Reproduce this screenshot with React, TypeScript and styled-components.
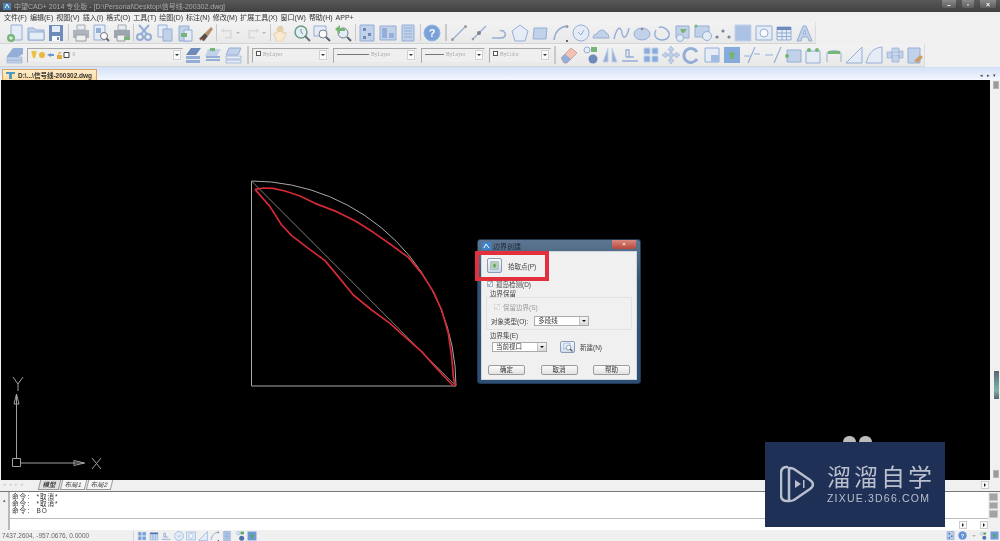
import React from "react";
import styled, { createGlobalStyle } from "styled-components";

const GlobalStyle = createGlobalStyle`
  html, body { margin: 0; padding: 0; background: #000; }
  body { font-family: "Liberation Sans", "Noto Sans CJK SC", sans-serif; }
`;

const Root = styled.div`
  width: 1000px;
  height: 541px;
  display: flex;
  flex-direction: column;
  overflow: hidden;
  position: relative;
  background: #f0f0f0;
  filter: blur(0.35px);
`;

const TitleBar = styled.div`
  height: 12px;
  flex: none;
  display: flex;
  align-items: center;
  background: linear-gradient(#595959, #404040);
  color: #a9a9a9;
  font-size: 7px;
  padding: 0 4px 0 3px;
  gap: 3px;
`;

const WinButtons = styled.div`
  margin-left: auto;
  display: flex;
  gap: 6px;
  align-self: flex-start;
`;

const WinButton = styled.div<{ $w: number }>`
  width: ${(p) => p.$w}px;
  height: 8px;
  background: linear-gradient(#8a8a8a, #5d5d5d);
  display: flex;
  align-items: center;
  justify-content: center;
  color: #fff;
  font-size: 7px;
  font-weight: bold;
  border-radius: 0 0 2px 2px;
`;

const MenuBar = styled.div`
  height: 10px;
  flex: none;
  display: flex;
  align-items: center;
  gap: 3px;
  padding-left: 4px;
  font-size: 7px;
  color: #333;
  white-space: nowrap;
`;

const ToolRow = styled.div<{ $h: number }>`
  height: ${(p) => p.$h}px;
  flex: none;
  display: flex;
  overflow: hidden;
`;

const ToolBand = styled.div<{ $w: number }>`
  width: ${(p) => p.$w}px;
  flex: none;
  display: flex;
  align-items: center;
  padding-left: 5px;
  box-sizing: border-box;
  background: linear-gradient(#f2f2f2, #e9e9e9);
  border-right: 1px solid #dcdcdc;
  border-bottom: 1px solid #d4d4d4;
`;

const Slot = styled.div<{ $w?: number }>`
  width: ${(p) => p.$w ?? 20.5}px;
  flex: none;
  display: flex;
  align-items: center;
  justify-content: center;
  svg { display: block; opacity: 0.8; }
`;

const Sep = styled.div<{ $w: number; $thick?: boolean }>`
  width: ${(p) => p.$w}px;
  flex: none;
  align-self: stretch;
  margin: 2px 0;
  display: flex;
  justify-content: center;
  &::before {
    content: "";
    width: ${(p) => (p.$thick ? 2 : 1)}px;
    background: #c9c9c9;
  }
`;

const Caret = styled.span`
  width: 0;
  height: 0;
  margin-left: 2px;
  border-left: 2px solid transparent;
  border-right: 2px solid transparent;
  border-top: 2px solid #b5b5b5;
`;

const Combo = styled.div<{ $w: number; $ml?: number; $mr?: number }>`
  width: ${(p) => p.$w}px;
  height: 15px;
  flex: none;
  box-sizing: border-box;
  margin-left: ${(p) => p.$ml ?? 0}px;
  margin-right: ${(p) => p.$mr ?? 4}px;
  display: flex;
  align-items: flex-start;
  gap: 2px;
  padding: 2px 0 0 3px;
  position: relative;
  font-size: 5.5px;
  color: #a9a9a9;
  font-family: "Liberation Serif", serif;
  background: #efefef;
  border: 1px solid #a8a8a8;
  border-right-color: #e8e8e8;
  border-bottom-color: #e8e8e8;
`;

const ComboArrow = styled.div`
  position: absolute;
  right: 1px;
  top: 1px;
  width: 8px;
  height: 10px;
  background: #fbfbfb;
  border: 1px solid #d2d2d2;
  box-sizing: border-box;
  display: flex;
  align-items: center;
  justify-content: center;
  &::before {
    content: "";
    border-left: 2px solid transparent;
    border-right: 2px solid transparent;
    border-top: 2px solid #333;
  }
`;

const LineSample = styled.span<{ $w: number }>`
  width: ${(p) => p.$w}px;
  height: 1px;
  margin-top: 3px;
  background: #777;
  flex: none;
`;

const ColorBox = styled.span`
  width: 5px;
  height: 5px;
  flex: none;
  border: 1px solid #555;
  background: #fff;
  box-sizing: border-box;
`;

const TabBand = styled.div`
  height: 13px;
  flex: none;
  display: flex;
  align-items: flex-end;
  padding-left: 2px;
  background: linear-gradient(#d3e0f8, #f4f7fe);
`;

const DocTab = styled.div`
  width: 95px;
  height: 11px;
  box-sizing: border-box;
  display: flex;
  align-items: center;
  gap: 3px;
  padding-left: 3px;
  border: 1px solid #d9a25a;
  border-bottom: none;
  background: linear-gradient(#fdeecb, #fbdca4);
  font-size: 6.5px;
  font-weight: bold;
  color: #333;
  white-space: nowrap;
`;

const TabNav = styled.div`
  margin-left: auto;
  margin-right: 3px;
  margin-bottom: 2px;
  font-size: 5px;
  color: #444;
  letter-spacing: 1px;
`;

const Workspace = styled.div`
  height: 400px;
  flex: none;
  display: flex;
  background: #f0f0f0;
`;

const Canvas = styled.div`
  width: 989px;
  margin-left: 1px;
  flex: none;
  background: #000;
  svg { display: block; }
`;

const SideBar = styled.div`
  flex: 1;
  display: flex;
  flex-direction: column;
  align-items: flex-end;
  padding: 1px 1px 0 0;
`;

const SideButton = styled.div`
  width: 6px;
  height: 8px;
  background: #9a9a9a;
  border: 1px solid #b5b5b5;
  box-sizing: border-box;
`;

const SideThumb = styled.div`
  width: 5px;
  height: 28px;
  margin-top: 282px;
  background: linear-gradient(#5a6470, #6f9c97 45%, #7fb0a8 70%, #59646d);
`;

const SideEnd = styled(SideButton)`
  margin-top: auto;
  margin-bottom: 2px;
`;

const LayoutTabs = styled.div`
  height: 11px;
  flex: none;
  display: flex;
  align-items: flex-start;
  padding-left: 3px;
  font-size: 6.5px;
  color: #444;
  background: #f0f0f0;
  border-bottom: 1px solid #777;
`;

const NavDots = styled.span`
  color: #c9c9c9;
  letter-spacing: 3px;
  font-size: 5px;
  margin-right: 8px;
  line-height: 9px;
  width: 28px;
`;

const LayoutTab = styled.span<{ $active?: boolean }>`
  padding: 0 3px;
  line-height: 9px;
  border: 1px solid #999;
  border-top: none;
  margin-right: 1px;
  transform: skewX(-14deg);
  background: ${(p) => (p.$active ? "#e2e2e2" : "#f5f5f5")};
  font-weight: ${(p) => (p.$active ? "bold" : "normal")};
`;

const HScroll = styled.div`
  display: flex;
  gap: 8px;
  margin: 1px 11px 0 auto;
`;

const ScrollBtn = styled.div`
  width: 8px;
  height: 8px;
  background: #fafafa;
  border: 1px solid #ccc;
  box-sizing: border-box;
  display: flex;
  align-items: center;
  justify-content: center;
  &::before {
    content: "";
    border-top: 2px solid transparent;
    border-bottom: 2px solid transparent;
    border-left: 2px solid #222;
  }
`;

const CommandArea = styled.div`
  height: 38px;
  flex: none;
  display: flex;
  background: #f0f0f0;
`;

const CommandGrip = styled.div`
  width: 8px;
  flex: none;
  border-right: 2px solid #b9b9b9;
  font-size: 5px;
  color: #666;
  line-height: 16px;
  text-align: center;
`;

const CommandBody = styled.div`
  width: 978px;
  flex: none;
  display: flex;
  flex-direction: column;
  background: #fff;
`;

const CommandLog = styled.div`
  height: 27px;
  flex: none;
  box-sizing: border-box;
  padding: 1px 0 0 2px;
  border-bottom: 1px solid #bdbdbd;
  font-size: 6.5px;
  line-height: 7.2px;
  letter-spacing: 1px;
  color: #333;
`;

const CommandLine = styled.div`
  display: flex;
  gap: 2px;
`;

const CommandInput = styled.div`
  flex: 1;
  display: flex;
  justify-content: flex-end;
  align-items: center;
  gap: 13px;
`;

const CommandScroll = styled.div`
  flex: 1;
  display: flex;
  flex-direction: column;
  gap: 1px;
  padding: 1px 2px 12px 1px;
`;

const CommandScrollPart = styled.div`
  flex: 1;
  background: #a3a3a3;
  border: 1px solid #c5c5c5;
`;

const StatusBar = styled.div`
  flex: 1;
  display: flex;
  align-items: center;
  padding-left: 2px;
  font-size: 6.5px;
  color: #666;
  background: #f0f0f0;
`;

const Coordinates = styled.div`
  width: 131px;
  flex: none;
  border-right: 1px solid #d5d5d5;
  line-height: 10px;
  white-space: nowrap;
`;

const StatusIcons = styled.div`
  margin-left: 3px;
  display: flex;
  gap: 2.2px;
`;

const StatusTray = styled.div`
  margin-left: auto;
  display: flex;
  align-items: center;
  gap: 3px;
  padding-right: 1px;
`;

const Dialog = styled.div`
  position: absolute;
  left: 477px;
  top: 239px;
  width: 164px;
  height: 145px;
  box-sizing: border-box;
  padding: 0 3px 3px;
  display: flex;
  flex-direction: column;
  border-radius: 3px;
  border: 1px solid #23364f;
  background: linear-gradient(#5d7590, #33536f 30%, #2c4e74);
  font-size: 6.5px;
  color: #444;
`;

const DialogHead = styled.div`
  height: 11px;
  flex: none;
  display: flex;
  align-items: center;
  gap: 2px;
  padding-left: 1px;
  color: #1e2a38;
  font-size: 7px;
`;

const DialogClose = styled.div`
  margin-left: auto;
  align-self: flex-start;
  width: 24px;
  height: 9px;
  margin-right: 1px;
  background: linear-gradient(#d98a80, #b9463c);
  border-radius: 0 0 3px 3px;
  color: #fff;
  font-size: 6px;
  line-height: 9px;
  text-align: center;
`;

const DialogBody = styled.div`
  flex: 1;
  background: #f0f0f0;
  padding: 7px 6px 0;
  display: flex;
  flex-direction: column;
  box-shadow: inset 0 0 0 1px #cfd6de;
`;

const Row = styled.div<{ $mt?: number; $ml?: number; $gap?: number }>`
  display: flex;
  align-items: center;
  gap: ${(p) => p.$gap ?? 4}px;
  margin-top: ${(p) => p.$mt ?? 0}px;
  margin-left: ${(p) => p.$ml ?? 0}px;
  white-space: nowrap;
`;

const PickButton = styled.div`
  width: 15px;
  height: 15px;
  box-sizing: border-box;
  border: 1px solid #8b9bb5;
  border-radius: 2px;
  background: linear-gradient(#f7f9fc, #cfdbe9);
  display: flex;
  align-items: center;
  justify-content: center;
`;

const CheckBox = styled.span<{ $dim?: boolean }>`
  width: 6px;
  height: 6px;
  flex: none;
  background: #fff;
  border: 1px solid ${(p) => (p.$dim ? "#ddd" : "#a6b4c4")};
  box-sizing: border-box;
  font-size: 6px;
  line-height: 4px;
  color: ${(p) => (p.$dim ? "#aaa" : "#47607e")};
  &::before { content: "✓"; }
`;

const FieldGroup = styled.div`
  margin: 0 -1px;
  padding: 4px 4px 3px;
  border: 1px solid #e2e2e2;
`;

const GroupTitle = styled.div<{ $mt?: number }>`
  margin: ${(p) => p.$mt ?? 1}px 0 0 3px;
  line-height: 7px;
`;

const Muted = styled.span`
  color: #9a9a9a;
`;

const Select = styled.div<{ $w: number }>`
  width: ${(p) => p.$w}px;
  height: 10px;
  box-sizing: border-box;
  flex: none;
  border: 1px solid #ababab;
  background: #fff;
  padding-left: 3px;
  line-height: 8px;
  position: relative;
  color: #333;
`;

const SelectArrow = styled.div`
  position: absolute;
  right: 0;
  top: 0;
  bottom: 0;
  width: 8px;
  background: linear-gradient(#f6f6f6, #d8d8d8);
  border-left: 1px solid #c4c4c4;
  display: flex;
  align-items: center;
  justify-content: center;
  &::before {
    content: "";
    border-left: 2px solid transparent;
    border-right: 2px solid transparent;
    border-top: 2px solid #111;
  }
`;

const NewButton = styled(PickButton)`
  width: 15px;
  height: 12px;
  margin-left: 10px;
  margin-right: 2px;
`;

const ButtonRow = styled.div`
  margin-top: auto;
  margin-bottom: 5px;
  padding: 0 1px;
  display: flex;
  justify-content: space-between;
`;

const DialogButton = styled.div`
  width: 37px;
  height: 10px;
  box-sizing: border-box;
  border: 1px solid #9c9c9c;
  border-radius: 2px;
  background: linear-gradient(#fbfbfb, #e2e2e2);
  text-align: center;
  line-height: 8px;
  color: #333;
`;

const Highlight = styled.div`
  position: absolute;
  left: 475px;
  top: 251px;
  width: 74px;
  height: 30px;
  box-sizing: border-box;
  border: 4px solid #e2303d;
`;

const Watermark = styled.div`
  position: absolute;
  left: 765px;
  top: 442px;
  width: 180px;
  height: 85px;
  box-sizing: border-box;
  padding: 23px 0 0 15px;
  display: flex;
  gap: 13px;
  background: #1f3057;
  color: #b9bfcd;
`;

const Ear = styled.div<{ $x: number }>`
  position: absolute;
  left: ${(p) => p.$x}px;
  top: -6px;
  width: 13px;
  height: 6px;
  border-radius: 7px 7px 0 0;
  background: #bcbcbc;
`;

const BrandText = styled.div`
  display: flex;
  flex-direction: column;
  gap: 3px;
`;

const BrandName = styled.div`
  font-size: 24px;
  line-height: 25px;
  letter-spacing: 3px;
  white-space: nowrap;
`;

const BrandUrl = styled.div`
  font-family: "Liberation Sans", sans-serif;
  font-size: 10.5px;
  line-height: 11px;
  letter-spacing: 1.2px;
  white-space: nowrap;
`;

const B = "#b7cbe8";
const M = "#7f9fd2";
const D = "#4f72ad";
const L = "#e3ecf8";
const G = "#58a858";

const icons: Record<string, React.ReactNode> = {
  new: <><path d="M5 1h11v15H5z" fill={L} stroke={M} /><circle cx="5" cy="14" r="4" fill={G} /><path d="M3 14h4M5 12v4" stroke="#fff" /></>,
  open: <><path d="M1 4h6l2 2h8v10H1z" fill={B} stroke={M} /><path d="M2 8h15v8H2z" fill={L} stroke={M} /></>,
  save: <><path d="M2 1h14v16H2z" fill={D} /><path d="M5 2h8v6H5z" fill={L} /><path d="M5 12h8v5H5z" fill="#fff" /><path d="M10 13h2v3h-2z" fill={D} /></>,
  print: <><path d="M5 1h8v5H5z" fill={L} stroke="#999" /><path d="M1 6h16v8H1z" fill="#9ea7b2" /><path d="M4 11h10v6H4z" fill="#eef0f3" stroke="#888" /></>,
  preview: <><path d="M2 1h11v15H2z" fill={L} stroke={M} /><path d="M4 4h5v5H4z" fill={M} /><circle cx="12" cy="12" r="3.5" fill="#fff" stroke="#556" /><path d="M14.5 14.5L17 17" stroke="#445" strokeWidth="2" /></>,
  plot: <><path d="M5 1h8v5H5z" fill={L} stroke="#999" /><path d="M1 6h16v8H1z" fill="#8a94a2" /><path d="M4 11h8v6H4z" fill="#eef0f3" stroke="#888" /><path d="M11 13h6v3h-6z" fill={G} /></>,
  cut: <><circle cx="5" cy="13" r="3" fill="none" stroke={M} strokeWidth="2" /><circle cx="13" cy="13" r="3" fill="none" stroke={M} strokeWidth="2" /><path d="M6 10L14 1M12 10L4 1" stroke={M} strokeWidth="2" /></>,
  copy: <><path d="M2 1h9v12H2z" fill={L} stroke={M} /><path d="M7 5h9v12H7z" fill={B} stroke={M} /></>,
  paste: <><path d="M3 2h10v15H3z" fill={B} stroke={M} /><path d="M8 6h8v11H8z" fill={L} stroke={M} /><path d="M5 9h6v4H5z" fill={G} /></>,
  match: <><path d="M2 15l6-6 3 3-4 5z" fill="#332a22" /><path d="M8 9l6-6 2 2-5 7z" fill="#a67a45" /><path d="M3 16l3-1" stroke="#c33" /></>,
  undo: <><path d="M4 6h10v9H6" fill="none" stroke="#cfd4da" strokeWidth="2" /><path d="M1 6l4-3v6z" fill="#cfd4da" /></>,
  redo: <><path d="M14 6H4v9h8" fill="none" stroke="#cfd4da" strokeWidth="2" /><path d="M17 6l-4-3v6z" fill="#cfd4da" /></>,
  hand: <path d="M5 9V4h1.5v4V2.5H8V8V2H9.5v6V3H11v7l2-2 1.5 1-3 6c-1 2-2 3-4 3-3 0-4-2-4-4l-2-4 1-1z" fill="#fbe9c8" stroke="#d8b98a" strokeWidth=".7" />,
  zoomrt: <><circle cx="8" cy="8" r="6" fill={L} stroke="#4f8a6a" strokeWidth="1.5" /><path d="M8 5v3l2 2" stroke="#4f8a6a" fill="none" /><path d="M12 12l5 5" stroke="#456" strokeWidth="2" /></>,
  zoomwin: <><path d="M1 2h12v10H1z" fill={L} stroke={M} /><circle cx="10" cy="10" r="4" fill="#fff" stroke="#567" /><path d="M13 13l4 4" stroke="#345" strokeWidth="2" /></>,
  zoomprev: <><circle cx="9" cy="9" r="5" fill={L} stroke="#567" /><path d="M1 5l5-4v3h5v3H6v3z" fill={G} /><path d="M13 13l4 4" stroke="#345" strokeWidth="2" /></>,
  props: <><path d="M2 1h14v16H2z" fill={B} stroke={M} /><path d="M5 4h3v3H5zM10 9h3v3h-3zM5 12h3v3H5z" fill={D} /></>,
  design: <><path d="M1 2h16v14H1z" fill={B} stroke={M} /><path d="M3 4h5v10H3zM10 9h5v5h-5z" fill={M} /></>,
  sheet: <><path d="M3 1h12v16H3z" fill={B} stroke={M} /><path d="M5 4h8M5 7h8M5 10h8M5 13h8" stroke={M} /></>,
  help: <><circle cx="9" cy="9" r="8" fill="#5f8fd4" stroke="#7ea6de" /><text x="9" y="13" fontSize="11" fontWeight="bold" fill="#fff" textAnchor="middle">?</text></>,
  line: <><path d="M2 16L16 2" stroke={M} strokeWidth="1.2" /><circle cx="2.5" cy="15.5" r="1.5" fill="#888" /><circle cx="15.5" cy="2.5" r="1.5" fill="#888" /></>,
  xline: <><path d="M2 16L16 2" stroke={M} strokeWidth="1.2" /><circle cx="9" cy="9" r="2" fill="#667" /><circle cx="3" cy="15" r="1.2" fill="#888" /></>,
  pline: <path d="M1 14h9c4 0 5-3 4-5s-3-3-5-2" fill="none" stroke={M} strokeWidth="1.5" />,
  polygon: <path d="M9 1l8 6-3 10H4L1 7z" fill={L} stroke={M} />,
  rect: <path d="M3 4h13l-1 11H2z" fill={B} stroke={M} />,
  arc: <><path d="M2 16C3 8 8 3 15 2" fill="none" stroke={M} strokeWidth="1.5" /><circle cx="15" cy="2.5" r="1.5" fill="#888" /><circle cx="15" cy="17" r="1" fill="#111" /></>,
  circle: <><circle cx="9" cy="9" r="8" fill={L} stroke={M} /><path d="M6 8l3 3 3-5" fill="none" stroke={M} /></>,
  cloud: <path d="M1 14c0-3 2-4 4-4 1-4 7-6 9-1 2 0 3 3 3 5z" fill={B} stroke={M} />,
  spline: <path d="M1 15C4 2 8 2 9 9s5 5 7-5" fill="none" stroke={M} strokeWidth="1.4" />,
  ellipse: <><ellipse cx="9" cy="10" rx="8" ry="6" fill={B} stroke={M} /><circle cx="9" cy="5" r="1.3" fill="#778" /></>,
  earc: <path d="M3 6c-3 5 0 10 6 10s9-5 6-9-8-5-9-3" fill="none" stroke={M} strokeWidth="1.4" />,
  block: <><path d="M3 2h13v12H3z" fill={B} stroke={M} /><circle cx="7" cy="14" r="3.5" fill={L} stroke={M} /><path d="M7 5h7l-3 4h-2z" fill={G} /></>,
  insert: <><path d="M1 2h14v11H1z" fill={B} stroke={M} /><circle cx="13" cy="12" r="4.5" fill={L} stroke={M} /><circle cx="2" cy="2" r="1.5" fill={G} /></>,
  point: <><circle cx="3" cy="13" r="1.6" fill="#5a6d8a" /><circle cx="9" cy="7" r="1.6" fill="#5a6d8a" /><circle cx="15" cy="13" r="1.6" fill="#5a6d8a" /></>,
  hatch: <path d="M1 1h16v16H1z" fill="#9db8e2" stroke={B} />,
  region: <><path d="M1 2h16v14H1z" fill={L} stroke={M} /><circle cx="9" cy="9" r="4" fill="#fff" stroke={M} /></>,
  table: <><path d="M2 3h14v13H2z" fill={L} stroke={M} /><path d="M2 3h14v3H2z" fill={D} /><path d="M2 9h14M2 12.5h14M7 6v10M11.5 6v10" stroke={M} /></>,
  mtext: <path d="M2 17L8 2h3l6 15h-3l-1.500-4h-5L6 17zm6-7h3L9.500 6z" fill={B} stroke={M} />,
  layers: <><path d="M1 10l6-8h10v6l-5 3H1z" fill={M} /><path d="M1 11h15v3H1zM1 14.500h15V17H1z" fill={B} stroke={M} strokeWidth=".6" /></>,
  layers2: <><path d="M2 9l5-7h10l-5 7z" fill={D} /><path d="M2 10h14v3H2zM2 14h14v3H2z" fill={M} /></>,
  layers3: <><path d="M4 3h13l-4 7H1z" fill={B} /><path d="M6 2h5v3H6z" fill={G} /><path d="M2 11h14M2 14h14" stroke={M} strokeWidth="2" /></>,
  layers4: <><path d="M4 2h12l-3 7H1z" fill={B} stroke={M} /><path d="M1 10h15v3H1zM1 14h15v3H1z" fill={L} stroke={M} strokeWidth=".7" /></>,
  erase: <><path d="M1 12L11 2l6 5-10 10H4z" fill="#f2b8a8" stroke="#cc8f80" /><path d="M1 12l4-4 6 5-4 4H4z" fill={M} /></>,
  copyobj: <><circle cx="6" cy="4" r="3" fill={L} stroke={M} /><path d="M10 1h6v5h-6z" fill={G} /><circle cx="12" cy="13" r="4.5" fill={D} /></>,
  mirror: <path d="M2 16L7 2v14zM16 16L11 2v14z" fill={M} stroke={B} />,
  offset: <path d="M1 15h16M5 11h8M5 11V4h3v7" stroke={M} fill="none" strokeWidth="1.3" />,
  array: <path d="M2 2h6v6H2zM10 2h6v6h-6zM2 10h6v6H2zM10 10h6v6h-6z" fill="#6f9ad8" stroke={B} />,
  move: <path d="M9 0l3 4h-2v4h4V6l4 3-4 3v-2h-4v4h2l-3 4-3-4h2v-4H4v2L0 9l4-3v2h4V4H6z" fill={B} stroke={M} strokeWidth=".6" />,
  rotate: <path d="M15 6A7 7 0 1 0 15 13" fill="none" stroke={M} strokeWidth="3" />,
  scale: <><path d="M2 2h14v14H2z" fill={L} stroke={M} /><path d="M8 9h8v7H8z" fill="#8fb0e2" /></>,
  stretch: <><path d="M1 1h16v16H1z" fill="#6e9ad8" /><path d="M9 5l4 4h-2v4H7V9H5z" fill={G} /></>,
  trim: <path d="M12 1L5 17M1 10h6M11 8h6" stroke={M} strokeWidth="1.2" />,
  extend: <path d="M1 9h8M17 1L10 17" stroke={M} strokeWidth="1.2" />,
  breakp: <><path d="M3 4h14v12H3z" fill={B} stroke={M} /><circle cx="3" cy="10" r="2" fill={G} /></>,
  breakat: <><path d="M2 5h14v12H2z" fill={L} stroke={M} /><circle cx="5" cy="4" r="2" fill={G} /><circle cx="13" cy="4" r="2" fill={G} /></>,
  join: <><path d="M2 16V7c0-3 14-3 14 0v9" fill="none" stroke={M} /><path d="M3 5h12v3H3z" fill={G} /></>,
  chamfer: <path d="M1 17L17 1v16z" fill={L} stroke={M} />,
  fillet: <path d="M1 17C4 7 8 2 17 1v16z" fill={L} stroke={M} />,
  explode: <path d="M1 6h5v6H1zM6 2h7v5H6zM6 9h7v7H6zM13 5h4v7h-4z" fill={B} stroke={M} strokeWidth=".7" />,
  propmatch: <><path d="M2 2h12v15H2z" fill={B} stroke={M} /><path d="M8 15l6-6 3 2-5 6z" fill="#c08b4a" /></>,
  pick: <><path d="M1 1h16v16H1z" fill="#b9cfb8" stroke="#8fa8c4" /><path d="M9 5l4 4h-2v4H7V9H5z" fill="#5aa35a" /></>,
};

function Icon({ name, size = 18 }: { name: string; size?: number }) {
  return (
    <svg width={size} height={size} viewBox="0 0 18 18">
      {icons[name]}
    </svg>
  );
}

const menus = ["文件(F)", "编辑(E)", "视图(V)", "插入(I)", "格式(O)", "工具(T)", "绘图(D)", "标注(N)", "修改(M)", "扩展工具(X)", "窗口(W)", "帮助(H)", "APP+"];

const drawTools = ["line", "xline", "pline", "polygon", "rect", "arc", "circle", "cloud", "spline", "ellipse", "earc", "block", "insert", "point", "hatch", "region", "table", "mtext"];

const modifyTools = ["erase", "copyobj", "mirror", "offset", "array", "move", "rotate", "scale", "stretch", "trim", "extend", "breakp", "breakat", "join", "chamfer", "fillet", "explode", "propmatch"];

const statusIcons = ["array", "table", "offset", "circle", "region", "chamfer", "arc", "sheet", "copyobj", "stretch"];

const toSvg = (pts: number[][]) => pts.map(([x, y]) => `${x / 3 + 240},${y / 3 + 170}`).join(" ");

const redTop = [[45, 58], [70, 54], [100, 55], [135, 63], [180, 78], [225, 100], [290, 125], [345, 152], [400, 187], [450, 222], [505, 262], [545, 310], [580, 365], [605, 420], [625, 490], [635, 560], [640, 620], [645, 648]];

const redBottom = [[45, 58], [90, 110], [125, 165], [155, 197], [205, 235], [255, 272], [295, 320], [340, 375], [395, 420], [450, 460], [500, 505], [545, 545], [590, 595], [640, 648]];

function Drawing() {
  return (
    <svg width="989" height="400" viewBox="1 80 989 400">
      <path d="M456 386A205 205 0 0 0 251.500 181V386H456" fill="none" stroke="#a8a8a8" strokeWidth="1" />
      <path d="M251.500 181L456 386" fill="none" stroke="#7c7c7c" strokeWidth="1" />
      <polyline points={toSvg(redTop)} fill="none" stroke="#d42a36" strokeWidth="1.700" strokeLinejoin="round" />
      <polyline points={toSvg(redBottom)} fill="none" stroke="#d42a36" strokeWidth="1.700" strokeLinejoin="round" />
      <g fill="none" stroke="#a0a0a0" strokeWidth="1">
        <path d="M16.500 458V394" />
        <path d="M14 404l2.500-10 2.500 10z" />
        <path d="M12.500 458.500h8v8h-8z" />
        <path d="M20.500 463h64" />
        <path d="M74 460.500l10.500 2.500-10.500 2.500z" />
        <path d="M13 377l5 7 5-7M18 384v7M92 458l9 11M101 458l-9 11" />
      </g>
    </svg>
  );
}

export default function App() {
  return (
    <Root>
      <GlobalStyle />
      <TitleBar>
        <svg width="8" height="8" viewBox="0 0 8 8"><path d="M0 1h8v7H0z" fill="#4f7fb5" /><path d="M2 6l2-4 2 4" stroke="#cfe" fill="none" /></svg>
        <span>中望CAD+ 2014 专业版 - [D:\Personal\Desktop\信号线-200302.dwg]</span>
        <WinButtons>
          <WinButton $w={14}>–</WinButton>
          <WinButton $w={12}>▫</WinButton>
          <WinButton $w={16}>×</WinButton>
        </WinButtons>
      </TitleBar>

      <MenuBar>
        {menus.map((m) => <span key={m}>{m}</span>)}
      </MenuBar>

      <ToolRow $h={22}>
        <ToolBand $w={816}>
          <Slot><Icon name="new" /></Slot>
          <Slot><Icon name="open" /></Slot>
          <Slot><Icon name="save" /></Slot>
          <Sep $w={4} />
          <Slot><Icon name="print" /></Slot>
          <Slot><Icon name="preview" /></Slot>
          <Slot><Icon name="plot" /></Slot>
          <Sep $w={2} />
          <Slot><Icon name="cut" /></Slot>
          <Slot><Icon name="copy" /></Slot>
          <Slot><Icon name="paste" /></Slot>
          <Slot><Icon name="match" /></Slot>
          <Sep $w={1} />
          <Slot $w={26}><Icon name="undo" size={14} /><Caret /></Slot>
          <Slot $w={26}><Icon name="redo" size={14} /><Caret /></Slot>
          <Sep $w={2} />
          <Slot><Icon name="hand" /></Slot>
          <Slot><Icon name="zoomrt" /></Slot>
          <Slot><Icon name="zoomwin" /></Slot>
          <Slot><Icon name="zoomprev" /></Slot>
          <Sep $w={4} />
          <Slot><Icon name="props" /></Slot>
          <Slot><Icon name="design" /></Slot>
          <Slot><Icon name="sheet" /></Slot>
          <Sep $w={3} />
          <Slot><Icon name="help" /></Slot>
          <Sep $w={7} $thick />
          {drawTools.map((t) => <Slot key={t} $w={20.3}><Icon name={t} /></Slot>)}
        </ToolBand>
      </ToolRow>

      <ToolRow $h={23}>
        <ToolBand $w={925}>
          <Slot><Icon name="layers" /></Slot>
          <Combo $w={156} $ml={1} $mr={0}>
            <svg width="40" height="8" viewBox="0 0 40 8">
              <path d="M1 3a2.500 2.500 0 1 1 4 0l-1 4H2z" fill="#e9c23f" />
              <circle cx="11" cy="4" r="3" fill="#e8b93a" />
              <path d="M16 4l4-2v1h3v2h-3v1z" fill="#6f94cf" />
              <path d="M26 4h5v4h-5zM27 4l1-3h2v1" fill="#e2a93b" />
              <path d="M33 1.500h5v5h-5z" fill="#fff" stroke="#444" />
            </svg>
            <span>0</span>
            <ComboArrow />
          </Combo>
          <Slot><Icon name="layers2" /></Slot>
          <Slot><Icon name="layers3" /></Slot>
          <Slot><Icon name="layers4" /></Slot>
          <Sep $w={7} $thick />
          <Combo $w={77} $ml={1}><ColorBox /><span>ByLayer</span><ComboArrow /></Combo>
          <Combo $w={84}><LineSample $w={32} /><span>ByLayer</span><ComboArrow /></Combo>
          <Combo $w={64}><LineSample $w={19} /><span>ByLayer</span><ComboArrow /></Combo>
          <Combo $w={62} $mr={0}><ColorBox /><span>ByColor</span><ComboArrow /></Combo>
          <Sep $w={8} $thick />
          {modifyTools.map((t) => <Slot key={t} $w={20.35}><Icon name={t} /></Slot>)}
        </ToolBand>
      </ToolRow>

      <TabBand>
        <DocTab>
          <svg width="9" height="8" viewBox="0 0 9 8"><path d="M0 1h9v2H0zM3 3h3v5H3z" fill="#4f9bc0" /></svg>
          <span>D:\...\信号线-200302.dwg</span>
        </DocTab>
        <TabNav>◂ ▸ ▾</TabNav>
      </TabBand>

      <Workspace>
        <Canvas><Drawing /></Canvas>
        <SideBar>
          <SideButton />
          <SideThumb />
          <SideEnd />
        </SideBar>
      </Workspace>

      <LayoutTabs>
        <NavDots>◂◂▸▸</NavDots>
        <LayoutTab $active>模型</LayoutTab>
        <LayoutTab>布局1</LayoutTab>
        <LayoutTab>布局2</LayoutTab>
        <HScroll><ScrollBtn /></HScroll>
      </LayoutTabs>

      <CommandArea>
        <CommandGrip>▴</CommandGrip>
        <CommandBody>
          <CommandLog>
            <CommandLine><span>命令：</span><span>*取消*</span></CommandLine>
            <CommandLine><span>命令：</span><span>*取消*</span></CommandLine>
            <CommandLine><span>命令：</span><span>BO</span></CommandLine>
          </CommandLog>
          <CommandInput><ScrollBtn /><ScrollBtn /></CommandInput>
        </CommandBody>
        <CommandScroll>
          <CommandScrollPart />
          <CommandScrollPart />
          <CommandScrollPart />
        </CommandScroll>
      </CommandArea>

      <StatusBar>
        <Coordinates>7437.2604, -957.0676, 0.0000</Coordinates>
        <StatusIcons>
          {statusIcons.map((s, i) => <Icon key={i} name={s} size={10} />)}
        </StatusIcons>
        <StatusTray>
          <Icon name="props" size={9} />
          <Icon name="help" size={9} />
          <Caret />
          <Icon name="copyobj" size={8} />
          <Icon name="stretch" size={9} />
        </StatusTray>
      </StatusBar>

      <Dialog>
        <DialogHead>
          <svg width="9" height="9" viewBox="0 0 9 9"><path d="M0 1h9v8H0z" fill="#3f83c9" /><path d="M2 7l2-4 3 4" stroke="#fff" fill="none" /></svg>
          <span>边界创建</span>
          <DialogClose>×</DialogClose>
        </DialogHead>
        <DialogBody>
          <Row $gap={6}>
            <PickButton><Icon name="pick" size={9} /></PickButton>
            <span>拾取点(P)</span>
          </Row>
          <Row $mt={6} $gap={3}><CheckBox /><span>孤岛检测(D)</span></Row>
          <GroupTitle>边界保留</GroupTitle>
          <FieldGroup>
            <Row $gap={3} $ml={3}><CheckBox $dim /><Muted>保留边界(S)</Muted></Row>
            <Row $mt={4} $gap={6}><span>对象类型(O):</span><Select $w={55}>多段线<SelectArrow /></Select></Row>
          </FieldGroup>
          <GroupTitle $mt={2}>边界集(E)</GroupTitle>
          <Row $gap={3} $ml={5} $mt={2}>
            <Select $w={55}>当前视口<SelectArrow /></Select>
            <NewButton><Icon name="zoomwin" size={10} /></NewButton>
            <span>新建(N)</span>
          </Row>
          <ButtonRow>
            <DialogButton>确定</DialogButton>
            <DialogButton>取消</DialogButton>
            <DialogButton>帮助</DialogButton>
          </ButtonRow>
        </DialogBody>
      </Dialog>
      <Highlight />

      <Watermark>
        <Ear $x={78} />
        <Ear $x={94} />
        <svg width="34" height="38" viewBox="0 0 34 38">
          <path d="M7 2C3 2 1 4 1 8v22c0 4 2 6 6 6M9 3c2 0 3 0 5 1l16 11c4 3 4 6 0 9L14 35c-2 1-3 1-5 1V3" fill="none" stroke="#b9bfcd" strokeWidth="2.500" strokeLinecap="round" />
          <path d="M15 15l6 4-6 4z" fill="#b9bfcd" />
          <path d="M23 15h1.500v8H23z" fill="#b9bfcd" />
        </svg>
        <BrandText>
          <BrandName>溜溜自学</BrandName>
          <BrandUrl>ZIXUE.3D66.COM</BrandUrl>
        </BrandText>
      </Watermark>
    </Root>
  );
}
